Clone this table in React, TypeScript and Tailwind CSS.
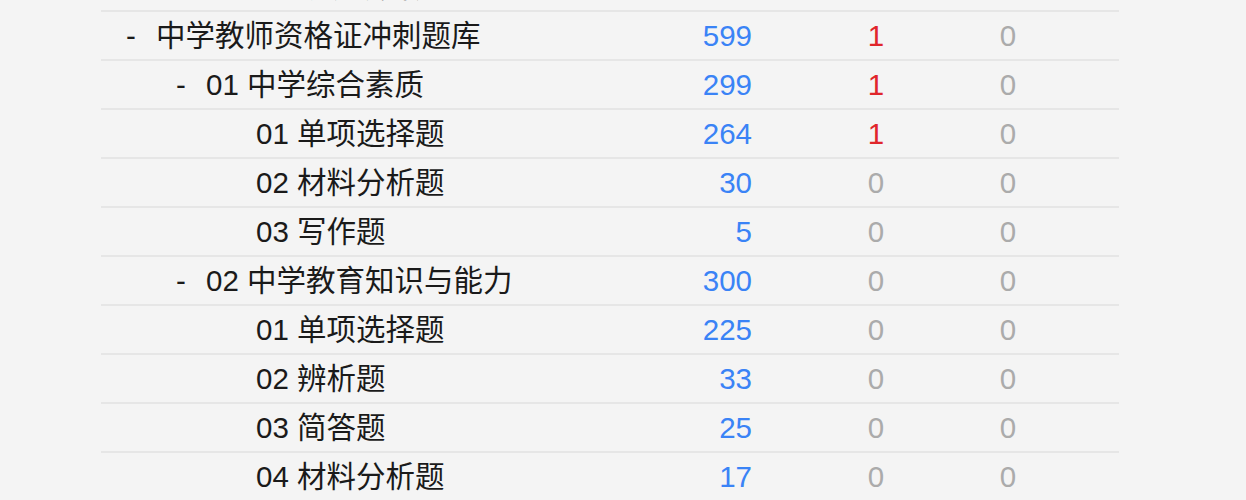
import React from "react";

type Row = { name: string; level: number; dash: boolean; a: number; b: number; c: number };

const rows: Row[] = [
  { name: "05 教学设计题", level: 2, dash: false, a: 0, b: 0, c: 0 },
  { name: "中学教师资格证冲刺题库", level: 0, dash: true, a: 599, b: 1, c: 0 },
  { name: "01 中学综合素质", level: 1, dash: true, a: 299, b: 1, c: 0 },
  { name: "01 单项选择题", level: 2, dash: false, a: 264, b: 1, c: 0 },
  { name: "02 材料分析题", level: 2, dash: false, a: 30, b: 0, c: 0 },
  { name: "03 写作题", level: 2, dash: false, a: 5, b: 0, c: 0 },
  { name: "02 中学教育知识与能力", level: 1, dash: true, a: 300, b: 0, c: 0 },
  { name: "01 单项选择题", level: 2, dash: false, a: 225, b: 0, c: 0 },
  { name: "02 辨析题", level: 2, dash: false, a: 33, b: 0, c: 0 },
  { name: "03 简答题", level: 2, dash: false, a: 25, b: 0, c: 0 },
  { name: "04 材料分析题", level: 2, dash: false, a: 17, b: 0, c: 0 },
];

const padByLevel = ["pl-[25px]", "pl-[75px]", "pl-[125px]"];

export default function App() {
  return (
    <div
      className="w-[1246px] h-[500px] overflow-hidden bg-[#f4f4f4] text-[29.5px] leading-none"
      style={{ fontFamily: '"Liberation Sans", "Noto Sans CJK SC", sans-serif' }}
    >
      <div className="ml-[101px] w-[1018px] mt-[-37px] flex flex-col">
        {rows.map((r, i) => (
          <div key={i} className="flex items-center h-[49px] border-b-2 border-[#e6e6e6]">
            <div className={`w-[551px] flex items-center ${padByLevel[r.level]} text-[#1a1a1a]`}>
              <span className="w-[30px] shrink-0">{r.dash ? "-" : ""}</span>
              <span>{r.name}</span>
            </div>
            <div className="w-[100px] text-right text-[#3a83f6]">{i === 0 ? "" : r.a}</div>
            <div className="w-[74px]" />
            <div className={`w-[100px] text-center ${r.b > 0 ? "text-[#e0262b]" : "text-[#ababab]"}`}>{i === 0 ? "" : r.b}</div>
            <div className="w-[50px]" />
            <div className="w-[64px] text-center text-[#ababab]">{i === 0 ? "" : r.c}</div>
          </div>
        ))}
      </div>
    </div>
  );
}
